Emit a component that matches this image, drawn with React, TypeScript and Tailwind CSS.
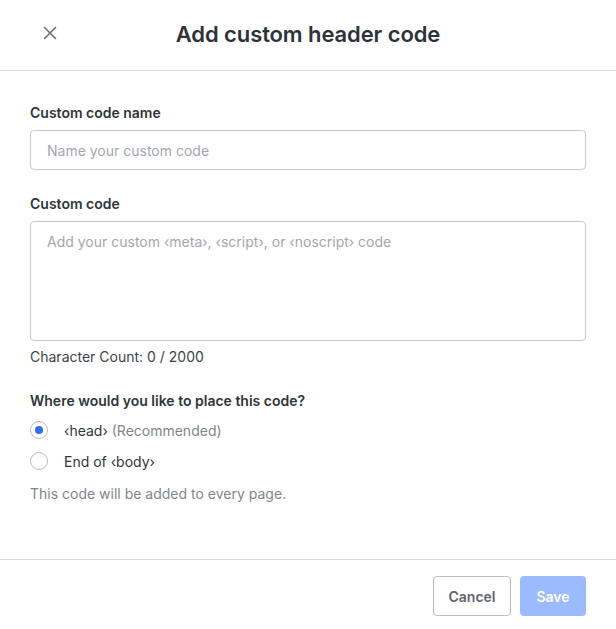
import React from "react";

export default function App() {
  const font = { fontFamily: "Inter, 'Noto Sans', sans-serif" };
  return (
    <div className="w-[616px] h-[629px] bg-white flex flex-col text-[#373f4a]" style={font}>
      <div className="h-[71px] shrink-0 border-b border-[#dadce0] relative flex items-center justify-center">
        <button className="absolute left-[40px] top-[23px] w-[20px] h-[20px] flex items-center justify-center text-[#6b7077]">
          <svg width="14" height="14" viewBox="0 0 14 14" fill="none" stroke="currentColor" strokeWidth="1.6" strokeLinecap="round">
            <path d="M1.5 1.5L12.5 12.5M12.5 1.5L1.5 12.5" />
          </svg>
        </button>
        <h1 className="text-[22px] font-semibold text-[#2e3339] tracking-[-0.1px] mt-[-1px]">Add custom header code</h1>
      </div>
      <div className="flex-1 px-[30px] pt-[33px] flex flex-col">
        <label className="text-[14px] font-semibold text-[#30353b] leading-[18px]">Custom code name</label>
        <div className="mt-[8px] h-[40px] border border-[#c5c8cc] rounded-[4px] flex items-center px-[16px] text-[14px] text-[#a3a7ad]">
          Name your custom code
        </div>
        <label className="mt-[25px] text-[14px] font-semibold text-[#30353b] leading-[18px]">Custom code</label>
        <div className="mt-[8px] h-[120px] border border-[#c5c8cc] rounded-[4px] px-[16px] pt-[9px] text-[14px] text-[#a3a7ad]">
          {"Add your custom ‹meta›, ‹script›, or ‹noscript› code"}
        </div>
        <div className="mt-[7px] text-[14px] text-[#3d434a] leading-[18px]">Character Count: 0 / 2000</div>
        <div className="mt-[26px] text-[14px] font-semibold text-[#30353b] leading-[18px]">Where would you like to place this code?</div>
        <div className="mt-[10px] flex items-center h-[20px]">
          <span className="w-[18px] h-[18px] rounded-full border border-[#b9bcc1] flex items-center justify-center">
            <span className="w-[8px] h-[8px] rounded-full bg-[#2f6ff0]" />
          </span>
          <span className="ml-[16px] text-[14px] text-[#30353b]">
            {"‹head›"} <span className="text-[#80868d]">(Recommended)</span>
          </span>
        </div>
        <div className="mt-[11px] flex items-center h-[20px]">
          <span className="w-[18px] h-[18px] rounded-full border border-[#b9bcc1]" />
          <span className="ml-[16px] text-[14px] text-[#30353b]">{"End of ‹body›"}</span>
        </div>
        <div className="mt-[14px] text-[14px] text-[#80868d] leading-[18px]">This code will be added to every page.</div>
      </div>
      <div className="h-[70px] shrink-0 border-t border-[#dadce0] flex items-start justify-end pr-[30px] pt-[16px] gap-[9px]">
        <button className="h-[40px] w-[78px] border border-[#b9bcc1] rounded-[4px] text-[14px] font-semibold text-[#5f656c] bg-white">Cancel</button>
        <button className="h-[40px] w-[66px] rounded-[4px] text-[14px] font-semibold text-white bg-[#9cbafe]">Save</button>
      </div>
    </div>
  );
}
